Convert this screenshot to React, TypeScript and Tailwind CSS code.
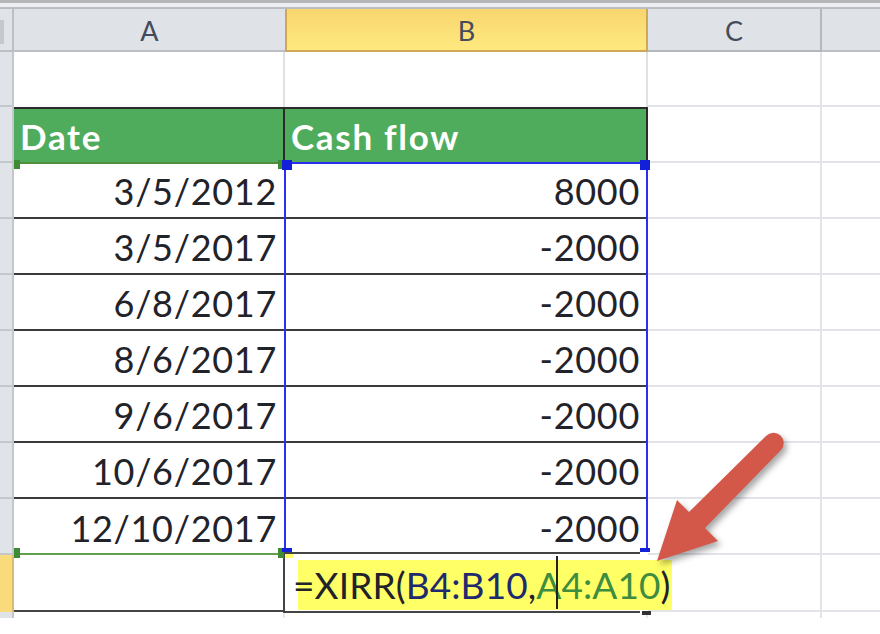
const rows = [
  ["3/5/2012", "8000"],
  ["3/5/2017", "-2000"],
  ["6/8/2017", "-2000"],
  ["8/6/2017", "-2000"],
  ["9/6/2017", "-2000"],
  ["10/6/2017", "-2000"],
  ["12/10/2017", "-2000"],
];

function Handle({ className }: { className: string }) {
  return <div className={`absolute ${className}`} />;
}

export default function App() {
  return (
    <div className="relative w-[880px] h-[634px] overflow-hidden bg-white font-['Lato','Carlito',sans-serif] text-[#22222a]">
      <div className="h-[3px] bg-[#b4b6b8]" />
      <div className="h-[6px] bg-[#eceef1] border-b-2 border-[#b9bcc1]" />

      <div className="grid grid-cols-[14px_271px_363px_174px_58px]">
        {/* column headers */}
        <div className="h-[43px] bg-[#e0e3e8] border-r-2 border-b-2 border-[#bcc0c6] pt-[11px]">
          <div className="w-[4px] h-[24px] bg-[#c6c8cc]" />
        </div>
        <div className="h-[43px] bg-[#dfe2e7] border-b-2 border-[#bcc0c6] flex items-center justify-center pt-[3px] text-[27px] text-[#444c5c]">A</div>
        <div className="h-[43px] bg-gradient-to-b from-[#f8d56f] to-[#fee97f] border-x-2 border-b-2 border-[#cfa75a] flex items-center justify-center pt-[3px] text-[27px] text-[#444c5c]">B</div>
        <div className="h-[43px] bg-[#dfe2e7] border-b-2 border-r-2 border-[#b4b7bc] flex items-center justify-center pt-[3px] text-[27px] text-[#444c5c]">C</div>
        <div className="h-[43px] bg-[#dfe2e7] border-b-2 border-[#bcc0c6]" />

        {/* empty row */}
        <div className="h-[55px] bg-[#e0e3e8] border-r-2 border-b-2 border-[#c4c7cc]" />
        <div className="h-[55px] border-r-2 border-[#dfe1e5]" />
        <div className="h-[55px] border-r-2 border-[#dfe1e5]" />
        <div className="h-[55px] border-r-2 border-b-2 border-[#e2e4e9]" />
        <div className="h-[55px] border-b-2 border-[#e2e4e9]" />

        {/* table head */}
        <div className="h-[56px] bg-[#e0e3e8] border-r-2 border-b-2 border-[#c4c7cc]" />
        <div className="h-[56px] bg-[#4fac5d] border-t-2 border-r-2 border-[#2b2b2b] flex items-center pl-[6px] text-[35px] font-bold tracking-[1.7px] text-white">Date</div>
        <div className="h-[56px] bg-[#4fac5d] border-t-2 border-r-2 border-[#2b2b2b] flex items-center pl-[6px] text-[35px] font-bold tracking-[1.7px] text-white">Cash flow</div>
        <div className="h-[56px] border-r-2 border-b-2 border-[#e2e4e9]" />
        <div className="h-[56px] border-b-2 border-[#e2e4e9]" />

        {/* data */}
        {rows.map(([d, v], i) => (
          <div key={d} className="contents">
            <div className="h-[56px] bg-[#e0e3e8] border-r-2 border-b-2 border-[#c4c7cc]" />
            <div className={`h-[56px] flex items-center justify-end pt-[2px] pr-[8px] text-[36px] tracking-[0.7px] ${i < 6 ? "border-b-2 border-[#3a3a3a]" : ""}`}>{d}</div>
            <div className={`h-[56px] flex items-center justify-end pt-[2px] pr-[8px] text-[36px] tracking-[0.7px] ${i < 6 ? "border-b-2 border-[#3a3a3a]" : ""}`}>{v}</div>
            <div className="h-[56px] border-r-2 border-b-2 border-[#e2e4e9]" />
            <div className="h-[56px] border-b-2 border-[#e2e4e9]" />
          </div>
        ))}

        {/* formula row */}
        <div className="h-[57px] bg-[#fadb7c] border-r-2 border-[#d9b878]" />
        <div className="h-[57px] border-b-2 border-[#444]" />
        <div className="relative z-10 h-[61px] w-[357px] -mt-[3px] -mb-[1px] -ml-[2px] border-l-2 border-b-2 border-t-2 border-[#444]">
          <div className="absolute left-0 top-0 h-[4px] w-[8px] bg-[#ffff66]" />
          <div className="absolute left-[13px] top-[6px] h-[50px] w-[374px] bg-[#ffff66]" />
          <div className="relative h-[57px] flex items-center pt-[4px] pl-[8px] whitespace-nowrap text-[37px] tracking-[0.1px]">
            <span>=XIRR(</span>
            <span className="text-[#1f2a6e]">B4:B10</span>
            <span>,</span>
            <span className="text-[#3d8c3f]">A4:A10</span>
            <span>)</span>
          </div>
        </div>
        <div className="h-[57px] border-r-2 border-b-2 border-[#e2e4e9]" />
        <div className="h-[57px] border-b-2 border-[#e2e4e9]" />

        {/* partial row under */}
        <div className="h-[6px] bg-[#e0e3e8] border-r-2 border-[#c4c7cc]" />
        <div className="h-[6px] border-r-2 border-[#e6e8eb]" />
        <div className="h-[6px] border-r-2 border-[#e6e8eb]" />
        <div className="h-[6px] border-r-2 border-[#e2e4e9]" />
        <div className="h-[6px]" />
      </div>

      {/* selection overlays */}
      <div className="absolute z-20 left-[284px] top-[162px] w-[364px] h-[388px] border-2 border-b-0 border-[#2a2ff0]" />
      <div className="absolute z-20 left-[14px] top-[162px] w-[270px] h-[2px] bg-[#4f8f3a]" />
      <div className="absolute z-20 left-[14px] top-[553px] w-[268px] h-[2px] bg-[#5fa04a]" />
      <Handle className="z-20 left-[14px] top-[160px] w-[6px] h-[9px] bg-[#3f8a34]" />
      <Handle className="z-20 left-[278px] top-[160px] w-[6px] h-[9px] bg-[#3f8a34]" />
      <Handle className="z-20 left-[14px] top-[548px] w-[6px] h-[10px] bg-[#3f8a34]" />
      <Handle className="z-20 left-[278px] top-[548px] w-[6px] h-[10px] bg-[#3f8a34]" />
      <Handle className="z-20 left-[282px] top-[160px] w-[10px] h-[10px] bg-[#1220d8]" />
      <Handle className="z-20 left-[640px] top-[160px] w-[10px] h-[10px] bg-[#1220d8]" />
      <Handle className="z-20 left-[282px] top-[548px] w-[10px] h-[4px] bg-[#1220d8]" />
      <Handle className="z-20 left-[640px] top-[548px] w-[10px] h-[4px] bg-[#1220d8]" />
      <Handle className="z-20 left-[642px] top-[611px] w-[9px] h-[4px] bg-[#333]" />

      {/* caret */}
      <div className="absolute z-20 left-[556px] top-[556px] w-[2px] h-[53px] bg-[#222]" />

      {/* arrow */}
      <svg className="absolute z-30 left-0 top-0 drop-shadow-[3px_4px_3px_rgba(0,0,0,0.35)]" width="880" height="634" viewBox="0 0 880 634" fill="none">
        <path d="M657 561 L677 500 L689 512 L766 436 A10 10 0 0 1 781 450 L705 528 L718 541 Z" fill="#d4584a" />
      </svg>
    </div>
  );
}
